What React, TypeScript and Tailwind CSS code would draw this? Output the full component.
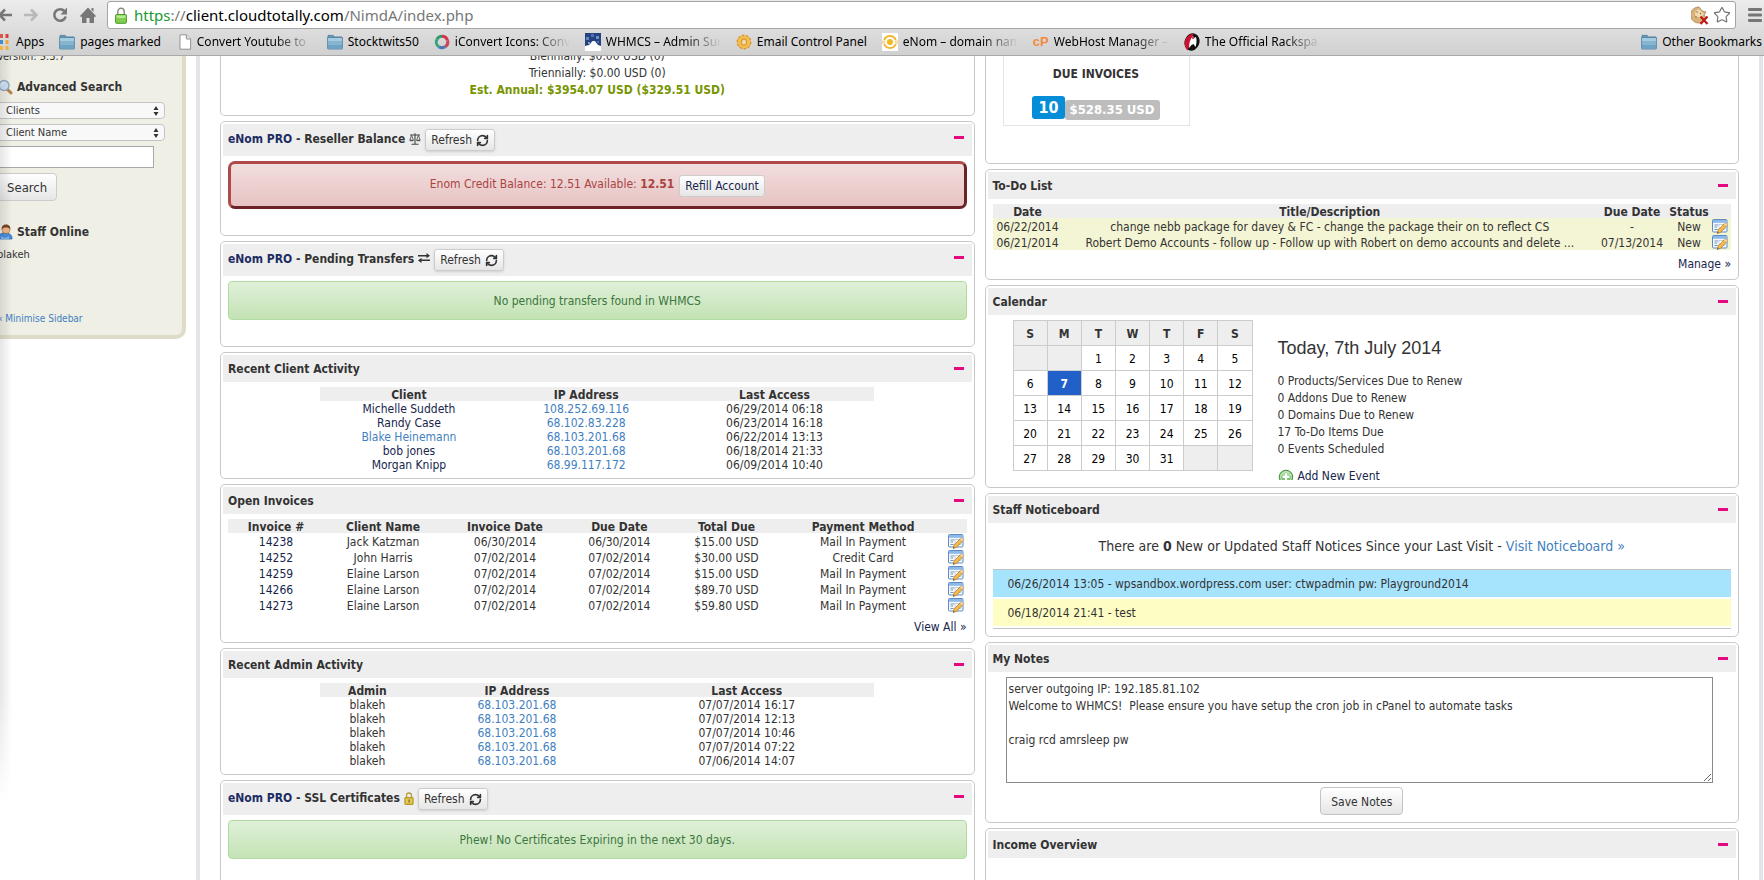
import React from "react";
import { RefreshCw, Star } from "lucide-react";

/* ---------- icons ---------- */

function FolderIcon() {
  return (
    <svg viewBox="0 0 16 16" className="size-4 shrink-0">
      <path d="M1 3.2V1.4h5.2l1 1.6h7.8v2H1z" fill="#6b9fbf" stroke="#3f6f8e" strokeWidth=".7" />
      <rect x=".6" y="3.4" width="14.8" height="11.6" rx=".6" fill="#87b4cf" stroke="#4a7d9c" strokeWidth=".8" />
      <path d="M1 4h14v3H1z" fill="#a5cbe0" />
      <path d="M1 11h14v3.6H1z" fill="#6fa3c3" />
    </svg>
  );
}

function DocIcon() {
  return (
    <svg viewBox="0 0 16 16" className="size-4 shrink-0">
      <path d="M4 .8h6.4L14.6 5v10.2H4z" fill="#fff" stroke="#8a8a8a" strokeWidth=".9" />
      <path d="M10.4.8V5h4.2" fill="#e5e5e5" stroke="#8a8a8a" strokeWidth=".9" />
    </svg>
  );
}

function AppsIcon() {
  return (
    <svg viewBox="0 0 11 16" className="h-4 w-[11px] shrink-0">
      <rect x="0" y="0" width="3" height="4" fill="#d8574d" />
      <rect x="5.5" y="0" width="3" height="4" fill="#d8413a" />
      <rect x="0" y="6" width="3" height="4" fill="#3f8dd0" />
      <rect x="5.5" y="6" width="3" height="4" fill="#efa63a" />
      <rect x="0" y="12" width="3" height="4" fill="#f0b545" />
      <rect x="5.5" y="12" width="3" height="4" fill="#efb03f" />
    </svg>
  );
}

function RingIcon() {
  return (
    <svg viewBox="0 0 16 16" className="size-4 shrink-0" fill="none" strokeWidth="3">
      <path d="M3 5.2A5.6 5.6 0 0 1 8 2.2" stroke="#2f9a6a" />
      <path d="M8 2.2a5.7 5.7 0 0 1 5.4 4" stroke="#d2364a" />
      <path d="M13.5 6.3A5.7 5.7 0 0 1 11 12.8" stroke="#c9475a" />
      <path d="M11 12.8a5.7 5.7 0 0 1-6 .1" stroke="#3f78b8" />
      <path d="M5 12.9A5.8 5.8 0 0 1 3 5.2" stroke="#3aa27b" />
    </svg>
  );
}

function WhmcsIcon() {
  return (
    <svg viewBox="0 0 16 18" className="h-[18px] w-4 shrink-0">
      <rect width="16" height="18" fill="#fff" />
      <path d="M0 0h16v13l-3-1-2-2.500c-1-2-4-2-5 .5L4 12l-4 1z" fill="#27427f" />
      <rect x="1" y="4" width="3" height="3" fill="#5f86c4" />
      <rect x="6" y="1" width="3" height="3" fill="#4c73b5" />
      <rect x="11" y="3" width="3" height="3" fill="#6b92cc" />
      <rect x="3" y="9" width="2" height="2" fill="#7fa2d6" />
      <rect x="12" y="8" width="2" height="2" fill="#4c73b5" />
    </svg>
  );
}

function GearIcon() {
  return (
    <svg viewBox="0 0 16 16" className="size-4 shrink-0">
      <circle cx="8" cy="8" r="6.6" fill="#e9a52e" stroke="#d78f20" strokeWidth="1.600" strokeDasharray="2.500 1.600" />
      <circle cx="8" cy="8" r="6.200" fill="#f4bf4f" />
      <ellipse cx="8" cy="8" rx="3.200" ry="3.800" fill="#dd9a30" />
      <ellipse cx="8" cy="8" rx="2" ry="2.600" fill="#ecdcb4" />
    </svg>
  );
}

function EnomIcon() {
  return (
    <svg viewBox="0 0 16 18" className="h-[18px] w-4 shrink-0">
      <rect width="16" height="18" fill="#fff" />
      <path d="M2.200 7a6.200 6.200 0 0 1 11.600 0M2.200 11a6.200 6.200 0 0 0 11.600 0" fill="none" stroke="#f0b832" strokeWidth="2" />
      <circle cx="8" cy="9" r="3" fill="#f5b81f" />
      <path d="M0 8.200h3M13 8.200h3M0 10h3M13 10h3" stroke="#f3c350" />
    </svg>
  );
}

function RackspaceIcon() {
  return (
    <svg viewBox="0 0 16 18" className="h-[18px] w-4 shrink-0">
      <ellipse cx="8" cy="9" rx="7.400" ry="8.800" fill="#111" transform="rotate(20 8 9)" />
      <path d="M3.500 17.500C-1 13-.5 2 10 .5L7 6l-2 8z" fill="#cf1030" />
      <path d="M5 15c0-5 1-9 4-12l1 2 2-1c1 3 .5 7-.5 10l-2-3-2 1z" fill="#fff" />
      <circle cx="9" cy="5" r="1" fill="#cf1030" />
    </svg>
  );
}

function EditIcon() {
  return (
    <svg viewBox="0 0 16 16" className="mr-[3px] ml-auto block h-4 w-4">
      <rect x=".5" y="1.500" width="14.500" height="12.500" rx="1" fill="#f3f8fd" stroke="#5b8bc4" />
      <rect x="1" y="2" width="13.500" height="2.800" fill="#8db9ea" />
      <path d="M2.500 7h3.500M2.500 9h2.500M2.500 11.500h3" stroke="#7d93ad" />
      <rect x="7" y="6.500" width="6" height="5" fill="#fff" stroke="#a6bdd6" strokeWidth=".7" />
      <path d="M13.200 4.800l2.300 2-6.800 7.400-3.400 1.300.8-3.400z" fill="#f6bd4c" stroke="#b5772a" strokeWidth=".8" />
      <path d="M13.200 4.800l2.300 2-1.200 1.300-2.300-2z" fill="#f8dcae" />
      <path d="M5.300 15.500l1.400-.6-1-.9z" fill="#444" />
    </svg>
  );
}

function ScaleIcon() {
  return (
    <svg viewBox="0 0 12 12" className="h-3 w-3" fill="none" stroke="#444">
      <path d="M1 2h10M6 .3v10.500M2.500 11.300h7" strokeWidth="1.100" />
      <path d="M2.600 2.300L.8 7.200h3.600zM9.400 2.300L7.600 7.200h3.600z" strokeWidth=".8" />
      <path d="M.8 7.700h3.600M7.600 7.700h3.600" strokeWidth="1" />
    </svg>
  );
}

function TransferIcon() {
  return (
    <svg viewBox="0 0 12 10" className="h-2.5 w-3" fill="#333">
      <path d="M0 2h8.500V0L12 2.800 8.500 5.200V3.600H0zM12 6.400H3.500V4.800L0 7.400 3.500 10V8H12z" />
    </svg>
  );
}

function GoldLockIcon() {
  return (
    <svg viewBox="0 0 10 13" className="h-[13px] w-2.5">
      <path d="M2.500 6V3.500a2.500 2.500 0 0 1 5 0V6" fill="none" stroke="#b8a23c" strokeWidth="1.300" />
      <rect x=".8" y="5.500" width="8.400" height="7" rx=".6" fill="#d9b93c" stroke="#a88a1e" strokeWidth=".8" />
      <path d="M2 8h6M2 10h6" stroke="#f1e08a" strokeWidth=".8" />
      <rect x="4.500" y="7.500" width="1.200" height="3" fill="#7a6410" />
    </svg>
  );
}

function MagnifierIcon() {
  return (
    <svg viewBox="0 0 16 16" className="size-4 shrink-0">
      <path d="M10 10l4 3.800" stroke="#b9824a" strokeWidth="3" strokeLinecap="round" />
      <circle cx="7" cy="6.500" r="5" fill="#cfe3f7" stroke="#94a9bf" strokeWidth="1.400" />
      <path d="M4.500 5.500A3 3 0 0 1 7 3.700" stroke="#fff" fill="none" />
    </svg>
  );
}

function StaffIcon() {
  return (
    <svg viewBox="0 0 16 16" className="size-4 shrink-0">
      <path d="M1.500 15c-.5-4 2-6 6.500-6s7.500 2 7 6z" fill="#4b8fe0" stroke="#2a63b0" strokeWidth=".7" />
      <path d="M4 12.500c2 1.500 6 1.500 8 0v2.300H4z" fill="#8fc0f5" />
      <circle cx="9" cy="5.600" r="4" fill="#f0b98b" stroke="#9a5a2a" strokeWidth=".5" />
      <path d="M4.700 5.500C4.500 2 6.500.6 9 .6s4.700 1.500 4.300 4.900c-1-1.500-2-2-4.300-2s-3 .5-4.300 2z" fill="#7a4320" />
    </svg>
  );
}

function AddIcon() {
  return (
    <svg viewBox="0 0 16 16" className="size-4 shrink-0">
      <circle cx="8" cy="8" r="6.800" fill="#7cc06f" stroke="#4a9142" />
      <path d="M2.500 7a5.600 5.600 0 0 1 11 0z" fill="#a9dba0" />
      <circle cx="8" cy="8" r="5.400" fill="none" stroke="#d7f0d2" strokeWidth=".8" />
      <path d="M8 4.500v7M4.500 8h7" stroke="#fff" strokeWidth="2.200" />
    </svg>
  );
}

/* ---------- browser toolbar ---------- */

function Bookmark({ icon, label, fade = false }: { icon: React.ReactNode; label: string; fade?: boolean }) {
  return (
    <a href="#" className="flex shrink-0 items-center gap-[5px]">
      {icon}
      <span
        className={fade ? "w-[115px] [mask-image:linear-gradient(to_right,#000_68%,transparent_100%)]" : ""}
      >
        {label}
      </span>
    </a>
  );
}

function BrowserBar() {
  return (
    <header className="h-14 shrink-0 border-b border-[#a9a9a9] bg-linear-to-b from-[#ececec] to-[#d0d0d0] font-['Noto_Sans',sans-serif] whitespace-nowrap text-black">
      <div className="flex h-[29px] items-center">
        <div className="flex w-[107px] shrink-0 items-center gap-3">
          <button aria-label="Back" className="-ml-1">
            <svg viewBox="0 0 16 16" className="size-4" fill="none" stroke="#777" strokeWidth="2.600">
              <path d="M16 8H4M9 2.500L3.500 8 9 13.500" />
            </svg>
          </button>
          <button aria-label="Forward">
            <svg viewBox="0 0 16 16" className="size-4" fill="none" stroke="#b9b9b9" strokeWidth="2.600">
              <path d="M0 8h12M7 2.500L12.500 8 7 13.500" />
            </svg>
          </button>
          <button aria-label="Reload">
            <svg viewBox="0 0 16 16" className="size-4">
              <path d="M12.500 4.200A5.800 5.800 0 1 0 13.700 9.500" fill="none" stroke="#777" strokeWidth="2.600" />
              <path d="M15 .6v6.900H8.500z" fill="#777" />
            </svg>
          </button>
          <button aria-label="Home">
            <svg viewBox="0 0 16 16" className="size-4" fill="#777">
              <path d="M8 .5L16 9l-1.200 1.200L14 9.500V16H9.500v-5h-3v5H2V9.500l-.8.700L0 9z" />
              <path d="M11.500 1h2v4l-2-2z" />
            </svg>
          </button>
        </div>
        <div className="mt-px flex h-7 min-w-0 flex-1 items-center rounded-[3px] border border-[#a5a5a5] bg-white pr-1 pl-[7px]">
          <svg viewBox="0 0 12 17" className="h-[17px] w-3 shrink-0">
            <path d="M2.800 8V4.500a3.200 3.200 0 0 1 6.400 0V8" fill="none" stroke="#8a8f86" strokeWidth="1.500" />
            <rect x=".6" y="7.500" width="10.800" height="8.800" rx=".8" fill="#7fce4f" stroke="#4d9a2b" />
            <path d="M1.500 8.500h9v2.500h-9z" fill="#b6ea8f" />
          </svg>
          <div className="ml-[7px] flex-1 text-[15px] leading-5 text-[#777]">
            <span className="text-[#1a9a32]">https</span>://<span className="text-black">client.cloudtotally.com</span>
            /NimdA/index.php
          </div>
          <svg viewBox="0 0 18 19" className="h-[19px] w-[18px] shrink-0">
            <path d="M8 1a8 8 0 1 0 7 11l-2-3 2-3-4-1z" fill="#d9b27a" stroke="#a8824e" strokeWidth=".8" />
            <path d="M7 3a6 6 0 0 0-3 5c0 2 3 4 6 3l3-3-3-3z" fill="#f0d9ae" />
            <circle cx="6" cy="6" r=".7" fill="#7d5a30" />
            <circle cx="9.500" cy="7.500" r=".7" fill="#7d5a30" />
            <circle cx="5" cy="11" r=".7" fill="#7d5a30" />
            <path d="M9.500 10.500l7 7.500M16.500 10.500l-7 7.500" stroke="#c01818" strokeWidth="2.200" />
          </svg>
          <button aria-label="Bookmark this page" className="ml-1">
            <Star size={18} strokeWidth={1.5} className="text-[#6f6f6f]" />
          </button>
        </div>
        <button aria-label="Menu" className="mr-0.5 ml-3 shrink-0">
          <svg viewBox="0 0 14 14" className="h-3.5 w-3.5" fill="#777">
            <rect width="14" height="3" rx="1" />
            <rect y="5.500" width="14" height="3" rx="1" />
            <rect y="11" width="14" height="3" rx="1" />
          </svg>
        </button>
      </div>
      <nav className="flex h-[26px] items-center justify-between pr-0.5 text-xs">
        <div className="flex items-center gap-[15px]">
          <Bookmark icon={<AppsIcon />} label="Apps" />
          <Bookmark icon={<FolderIcon />} label="pages marked" />
          <Bookmark icon={<DocIcon />} label="Convert Youtube to" fade />
          <Bookmark icon={<FolderIcon />} label="Stocktwits50" />
          <Bookmark icon={<RingIcon />} label="iConvert Icons: Conv" fade />
          <Bookmark icon={<WhmcsIcon />} label="WHMCS – Admin Sun" fade />
          <Bookmark icon={<GearIcon />} label="Email Control Panel" />
          <Bookmark icon={<EnomIcon />} label="eNom – domain nam" fade />
          <Bookmark
            icon={
              <span className="w-4 shrink-0 font-['Liberation_Sans',sans-serif] text-[13px] leading-4 font-bold text-[#f58a3c]">
                cP
              </span>
            }
            label="WebHost Manager –"
            fade
          />
          <Bookmark icon={<RackspaceIcon />} label="The Official Rackspa" fade />
        </div>
        <Bookmark icon={<FolderIcon />} label="Other Bookmarks" />
      </nav>
    </header>
  );
}

/* ---------- shared page pieces ---------- */

const navy = "text-[#16264d]";
const blue = "text-[#3f7fc1]";

function RefreshButton() {
  return (
    <button className="ml-1 flex h-[22px] items-center gap-1 rounded-[3px] border border-[#ccc] bg-linear-to-b from-white to-[#e6e6e6] px-[5px] pt-px font-normal shadow-sm">
      Refresh
      <RefreshCw size={13} strokeWidth={3} />
    </button>
  );
}

function Panel({
  title,
  enom = false,
  icon,
  children,
}: {
  title: string;
  enom?: boolean;
  icon?: React.ReactNode;
  children?: React.ReactNode;
}) {
  return (
    <section className="rounded-[5px] border border-[#c8c8c8] bg-white p-0.5">
      <div className={`flex items-start justify-between bg-[#eee] pr-2 pl-[5px] ${enom ? "h-8" : "h-[27px]"}`}>
        <h2 className="flex items-start font-bold">
          <span className={enom ? "mt-[7px]" : "mt-1.5"}>
            {enom && (
              <a href="#" className="text-[#1d2c63]">
                eNom PRO
              </a>
            )}
            {enom && " - "}
            {title}
          </span>
          {icon && <span className="mt-[9px] ml-1">{icon}</span>}
          {enom && (
            <span className="mt-[5px]">
              <RefreshButton />
            </span>
          )}
        </h2>
        <button aria-label={`Collapse ${title}`} className="mt-3 h-[3px] w-2.5 bg-[#e5097f]" />
      </div>
      <div className="p-[5px]">{children}</div>
    </section>
  );
}

function SuccessBox({ children }: { children: React.ReactNode }) {
  return (
    <div className="mb-[19px] flex h-[39px] items-center justify-center rounded border border-[#b2dba1] bg-linear-to-b from-[#dff0d8] to-[#c4e3b5] pt-0.5 text-[#3c763d]">
      {children}
    </div>
  );
}

/* Row heights: 14px for header and activity rows, 16px for rows with an edit icon. */
const headRow = "bg-[#eee] leading-3 [&_th]:pt-0.5";
const tightRows = "leading-3 [&_td]:pt-0.5";
const iconRows = "leading-[14px] [&_td]:pt-0.5 [&_td:last-child]:pt-0";

const clients = [
  ["Michelle Suddeth", "108.252.69.116", "06/29/2014 06:18"],
  ["Randy Case", "68.102.83.228", "06/23/2014 16:18"],
  ["Blake Heinemann", "68.103.201.68", "06/22/2014 13:13"],
  ["bob jones", "68.103.201.68", "06/18/2014 21:33"],
  ["Morgan Knipp", "68.99.117.172", "06/09/2014 10:40"],
];

const admins = ["07/07/2014 16:17", "07/07/2014 12:13", "07/07/2014 10:46", "07/07/2014 07:22", "07/06/2014 14:07"];

const invoices = [
  ["14238", "Jack Katzman", "06/30/2014", "06/30/2014", "$15.00 USD", "Mail In Payment"],
  ["14252", "John Harris", "07/02/2014", "07/02/2014", "$30.00 USD", "Credit Card"],
  ["14259", "Elaine Larson", "07/02/2014", "07/02/2014", "$15.00 USD", "Mail In Payment"],
  ["14266", "Elaine Larson", "07/02/2014", "07/02/2014", "$89.70 USD", "Mail In Payment"],
  ["14273", "Elaine Larson", "07/02/2014", "07/02/2014", "$59.80 USD", "Mail In Payment"],
];

const weeks = [
  ["", "", "1", "2", "3", "4", "5"],
  ["6", "7", "8", "9", "10", "11", "12"],
  ["13", "14", "15", "16", "17", "18", "19"],
  ["20", "21", "22", "23", "24", "25", "26"],
  ["27", "28", "29", "30", "31", "", ""],
];

/* ---------- sidebar ---------- */

function SidebarSelect({ id, label, value }: { id: string; label: string; value: string }) {
  return (
    <div className="relative mt-[5px]">
      <label htmlFor={id} className="sr-only">
        {label}
      </label>
      <select
        id={id}
        className="block h-[17px] w-full appearance-none rounded border border-[#c4c4c4] bg-[#f8f8f8] px-2 text-[11px] leading-[15px]"
      >
        <option>{value}</option>
      </select>
      <svg viewBox="0 0 6 10" className="pointer-events-none absolute top-1 right-1.5 h-2.5 w-1.5" fill="#333">
        <path d="M3 0l2.500 4h-5zM3 10l2.500-4h-5z" />
      </svg>
    </div>
  );
}

function Sidebar() {
  return (
    <aside className="-ml-[13px] w-[199px] shrink-0 self-start rounded-br-[10px] border-r-4 border-b-4 border-[#dedcc8] bg-[#efefe6] pr-[17px] pb-2 pl-2.5 text-[11px] leading-[17px]">
      <p className="-mt-2">Version: 5.3.7</p>
      <h2 className="mt-3 flex h-5 items-center gap-1 text-xs font-bold">
        <MagnifierIcon />
        Advanced Search
      </h2>
      <SidebarSelect id="search-type" label="Search type" value="Clients" />
      <SidebarSelect id="search-field" label="Search field" value="Client Name" />
      <label htmlFor="search-text" className="sr-only">
        Search text
      </label>
      <input id="search-text" className="mt-[5px] block h-[22px] w-[157px] border border-[#a9a9a9] bg-white px-1" />
      <button className="mt-[5px] block h-7 rounded border border-[#ccc] bg-linear-to-b from-white to-[#e6e6e6] px-[9px] text-[13px]">
        Search
      </button>
      <h2 className="mt-[21px] flex h-5 items-center gap-1 text-xs font-bold">
        <StaffIcon />
        Staff Online
      </h2>
      <p className="mt-1">blakeh</p>
      <p className="mt-[47px] text-[10px]">
        <a href="#" className={blue}>
          « Minimise Sidebar
        </a>
      </p>
    </aside>
  );
}

/* ---------- left column ---------- */

function LeftColumn() {
  return (
    <div className="flex min-w-0 flex-1 flex-col gap-[5px]">
      <section className="-mt-2 rounded-b-[5px] border border-t-0 border-[#c8c8c8] pb-4 text-center leading-[17px]">
        <p>Biennially: $0.00 USD (0)</p>
        <p>Triennially: $0.00 USD (0)</p>
        <p className="font-bold text-[#779500]">Est. Annual: $3954.07 USD ($329.51 USD)</p>
      </section>

      <Panel title="Reseller Balance" enom icon={<ScaleIcon />}>
        <div className="mb-[19px] flex h-12 justify-center rounded-[7px] border-[3px] border-t-[#b04a4a] border-r-[#6b2328] border-b-[#6b2328] border-l-[#b04a4a] bg-linear-to-b from-[#f2dede] to-[#e7c3c3] pt-3 text-[#a94442]">
          <p className="leading-[17px]">
            Enom Credit Balance: 12.51 Available: <b>12.51</b>
          </p>
          <a
            href="#"
            className="-mt-px ml-[5px] flex h-[22px] items-center rounded-[3px] border border-[#ccc] bg-linear-to-b from-white to-[#e6e6e6] px-[5px] text-[#16264d]"
          >
            Refill Account
          </a>
        </div>
      </Panel>

      <Panel title="Pending Transfers" enom icon={<TransferIcon />}>
        <SuccessBox>No pending transfers found in WHMCS</SuccessBox>
      </Panel>

      <Panel title="Recent Client Activity">
        <table className="mx-auto w-3/4 table-fixed text-center">
          <thead className={headRow}>
            <tr>
              <th className="w-[32%]">Client</th>
              <th className="w-[32%]">IP Address</th>
              <th>Last Access</th>
            </tr>
          </thead>
          <tbody className={tightRows}>
            {clients.map(([name, ip, last]) => (
              <tr key={name}>
                <td>
                  <a href="#" className={name === "Blake Heinemann" ? blue : navy}>
                    {name}
                  </a>
                </td>
                <td>
                  <a href="#" className={blue}>
                    {ip}
                  </a>
                </td>
                <td>{last}</td>
              </tr>
            ))}
          </tbody>
        </table>
      </Panel>

      <Panel title="Open Invoices">
        <table className="w-full table-fixed text-center">
          <thead className={headRow}>
            <tr>
              <th className="w-[13%]">Invoice #</th>
              <th className="w-[16%]">Client Name</th>
              <th className="w-[17%]">Invoice Date</th>
              <th className="w-[14%]">Due Date</th>
              <th className="w-[15%]">Total Due</th>
              <th className="w-[22%]">Payment Method</th>
              <th className="w-[3%]"></th>
            </tr>
          </thead>
          <tbody className={iconRows}>
            {invoices.map((row) => (
              <tr key={row[0]}>
                {row.map((cell, i) => (
                  <td key={i}>
                    {i === 0 ? (
                      <a href="#" className={navy}>
                        {cell}
                      </a>
                    ) : (
                      cell
                    )}
                  </td>
                ))}
                <td>
                  <a href="#" aria-label="Edit invoice">
                    <EditIcon />
                  </a>
                </td>
              </tr>
            ))}
          </tbody>
        </table>
        <p className="pt-1.5 text-right leading-4">
          <a href="#" className={navy}>
            View All »
          </a>
        </p>
      </Panel>

      <Panel title="Recent Admin Activity">
        <table className="mx-auto w-3/4 table-fixed text-center">
          <thead className={headRow}>
            <tr>
              <th className="w-[17%]">Admin</th>
              <th className="w-[37%]">IP Address</th>
              <th>Last Access</th>
            </tr>
          </thead>
          <tbody className={tightRows}>
            {admins.map((last) => (
              <tr key={last}>
                <td>blakeh</td>
                <td>
                  <a href="#" className={blue}>
                    68.103.201.68
                  </a>
                </td>
                <td>{last}</td>
              </tr>
            ))}
          </tbody>
        </table>
      </Panel>

      <Panel title="SSL Certificates" enom icon={<GoldLockIcon />}>
        <SuccessBox>Phew! No Certificates Expiring in the next 30 days.</SuccessBox>
      </Panel>
    </div>
  );
}

/* ---------- right column ---------- */

function RightColumn() {
  return (
    <div className="flex min-w-0 flex-1 flex-col gap-[5px]">
      <section className="rounded-b-[5px] border border-t-0 border-[#c8c8c8] pb-[37px] pl-[17px]">
        <div className="w-[187px] border border-t-0 border-[#e1e5e9] pt-2.5 pb-[5px] text-center">
          <p className="leading-[17px] font-bold">DUE INVOICES</p>
          <p className="mt-[13px] flex items-end justify-center font-bold text-white">
            <span className="mb-px rounded-[3px] bg-[#058dd8] px-1.5 text-base leading-[23px]">10</span>
            <span className="rounded-[3px] bg-[#bdbdbd] px-[5px] text-[13px] leading-5">$528.35 USD</span>
          </p>
        </div>
      </section>

      <Panel title="To-Do List">
        <table className="w-full table-fixed text-center">
          <thead className={headRow}>
            <tr>
              <th className="w-[70px]">Date</th>
              <th>Title/Description</th>
              <th className="w-[70px]">Due Date</th>
              <th className="w-11">Status</th>
              <th className="w-5"></th>
            </tr>
          </thead>
          <tbody className={`bg-[#f4f5d5] ${iconRows}`}>
            <tr>
              <td>06/22/2014</td>
              <td>change nebb package for davey &amp; FC - change the package their on to reflect CS</td>
              <td>-</td>
              <td>New</td>
              <td>
                <a href="#" aria-label="Edit to-do">
                  <EditIcon />
                </a>
              </td>
            </tr>
            <tr>
              <td>06/21/2014</td>
              <td className="whitespace-nowrap">
                Robert Demo Accounts - follow up - Follow up with Robert on demo accounts and delete ...
              </td>
              <td>07/13/2014</td>
              <td>New</td>
              <td>
                <a href="#" aria-label="Edit to-do">
                  <EditIcon />
                </a>
              </td>
            </tr>
          </tbody>
        </table>
        <p className="pt-1.5 text-right leading-4">
          <a href="#" className={navy}>
            Manage »
          </a>
        </p>
      </Panel>

      <Panel title="Calendar">
        <div className="flex h-40 overflow-hidden">
          <table className="ml-5 h-[151px] w-60 table-fixed border-collapse text-center text-black">
            <thead>
              <tr className="h-[25px] bg-[#eee] text-[#333]">
                {["S", "M", "T", "W", "T", "F", "S"].map((d, i) => (
                  <th key={i} className="border border-[#ccc] pt-0.5">
                    {d}
                  </th>
                ))}
              </tr>
            </thead>
            <tbody>
              {weeks.map((week, w) => (
                <tr key={w} className="h-[25px]">
                  {week.map((day, i) => (
                    <td
                      key={i}
                      className={
                        day === "7"
                          ? "border border-[#ccc] bg-[#2060c8] pt-0.5 font-bold text-white"
                          : day === ""
                            ? "border border-[#ccc] bg-[#eee] pt-0.5"
                            : "border border-[#ccc] pt-0.5"
                      }
                    >
                      {day}
                    </td>
                  ))}
                </tr>
              ))}
            </tbody>
          </table>
          <div className="ml-[25px] leading-[17px]">
            <h3 className="mt-[18px] mb-[15px] font-['Liberation_Sans',sans-serif] text-lg leading-5">
              Today, 7th July 2014
            </h3>
            <p>0 Products/Services Due to Renew</p>
            <p>0 Addons Due to Renew</p>
            <p>0 Domains Due to Renew</p>
            <p>17 To-Do Items Due</p>
            <p>0 Events Scheduled</p>
            <a href="#" className="mt-2.5 flex items-start gap-1 text-[#16264d]">
              <span className="mt-px">
                <AddIcon />
              </span>
              Add New Event
            </a>
          </div>
        </div>
      </Panel>

      <Panel title="Staff Noticeboard">
        <p className="pt-[9px] pb-[13px] text-center text-sm leading-[19px]">
          There are <b>0</b> New or Updated Staff Notices Since your Last Visit -{" "}
          <a href="#" className={blue}>
            Visit Noticeboard »
          </a>
        </p>
        <ul className="flex flex-col gap-0.5 border-y border-[#c4c4c4] pb-0.5 leading-[25px]">
          <li className="bg-[#a6e3fd] px-[15px] pt-0.5">
            06/26/2014 13:05 - wpsandbox.wordpress.com user: ctwpadmin pw: Playground2014
          </li>
          <li className="bg-[#fefec4] px-[15px] pt-0.5">06/18/2014 21:41 - test</li>
        </ul>
      </Panel>

      <Panel title="My Notes">
        <label htmlFor="notes" className="sr-only">
          My notes
        </label>
        <textarea
          id="notes"
          className="mx-[13px] block h-[106px] w-[calc(100%-31px)] resize border border-[#8a8a8a] bg-white px-0.5 py-[3px] leading-[17px]"
          defaultValue={
            "server outgoing IP: 192.185.81.102\nWelcome to WHMCS!  Please ensure you have setup the cron job in cPanel to automate tasks\n\ncraig rcd amrsleep pw"
          }
        />
        <button className="mx-auto mt-1 block h-7 rounded border border-[#c4c4c4] bg-linear-to-b from-white to-[#e6e6e6] px-2.5 pt-0.5">
          Save Notes
        </button>
      </Panel>

      <Panel title="Income Overview">
        <div className="h-40" />
      </Panel>
    </div>
  );
}

export default function App() {
  return (
    <div className="flex h-screen flex-col overflow-hidden bg-white font-['DejaVu_Sans_Condensed',sans-serif] text-xs leading-[17px] text-[#333]">
      <BrowserBar />
      <div className="relative flex min-h-0 flex-1 overflow-hidden">
        <Sidebar />
        <main className="mr-px ml-2.5 flex min-w-0 flex-1 gap-2.5 self-start border-x-4 border-[#e1e5e9] px-5">
          <LeftColumn />
          <RightColumn />
        </main>
        <div className="pointer-events-none absolute top-0 left-0 h-[750px] w-3 bg-linear-to-r from-black/10 to-transparent [mask-image:linear-gradient(to_bottom,#000_85%,transparent)]" />
      </div>
    </div>
  );
}
